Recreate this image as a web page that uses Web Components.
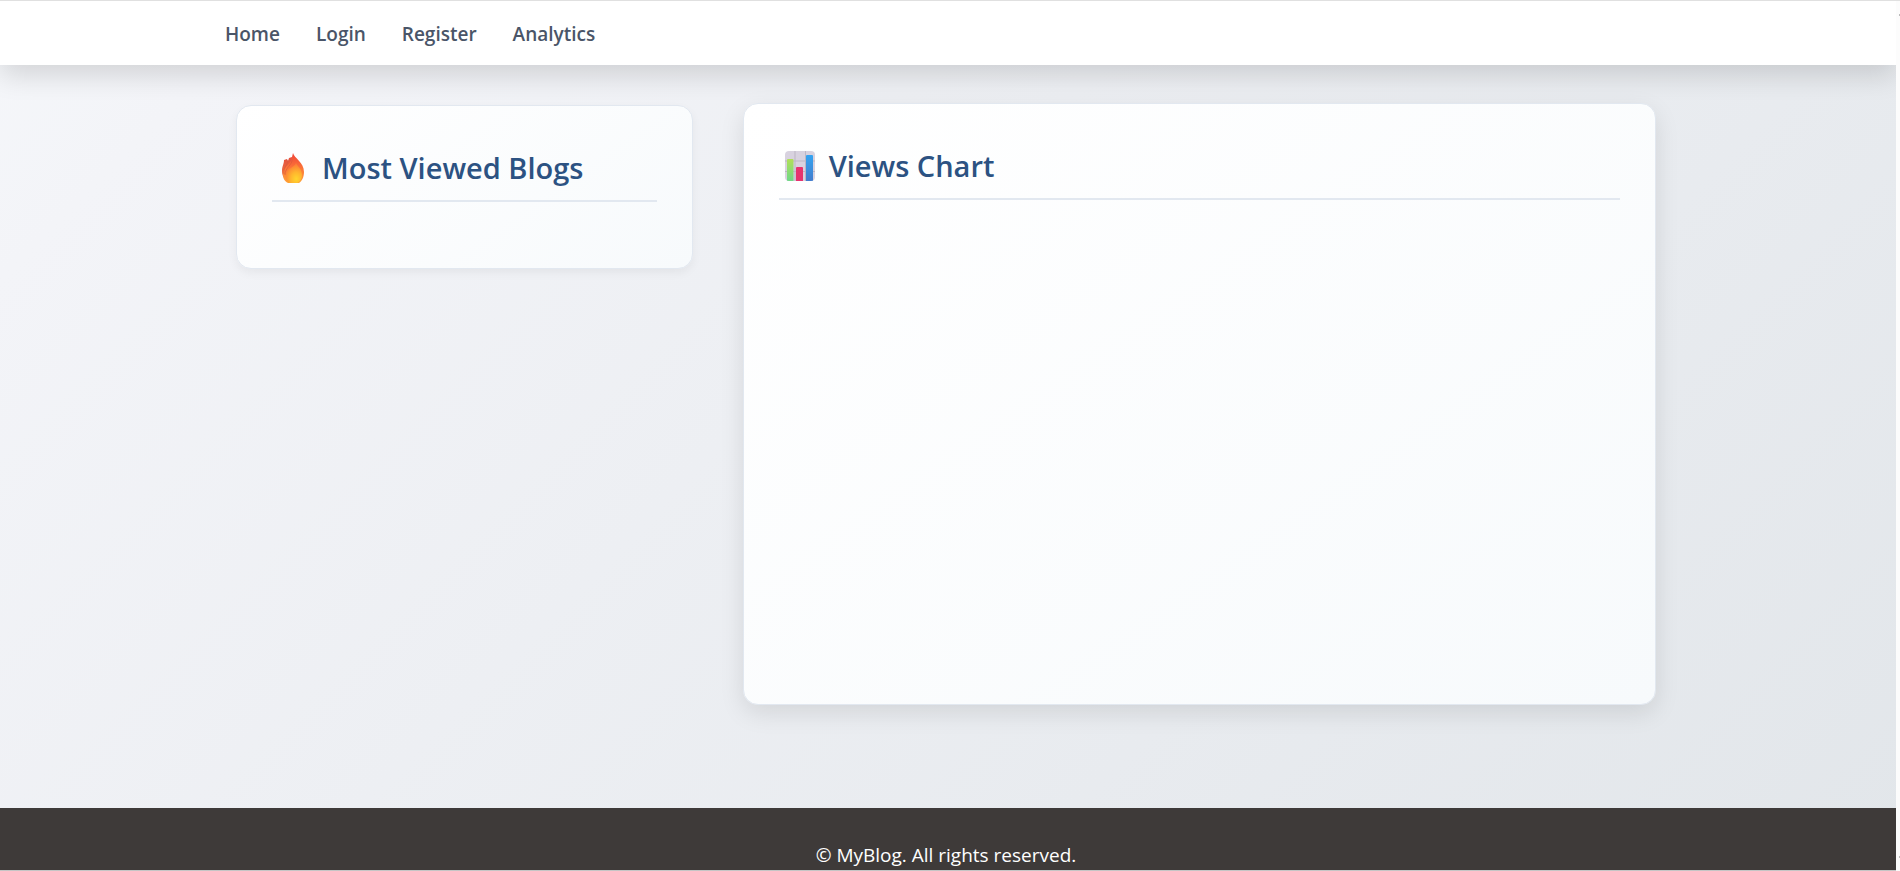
<!DOCTYPE html>
<html lang="en">
<head>
<meta charset="utf-8">
<title>MyBlog Analytics</title>
<style>
html, body { margin: 0; height: 100%; overflow: hidden; }
body { font-family: "Open Sans", "Noto Sans", sans-serif; font-size: 19px; line-height: 28px; }
</style>
</head>
<body>
<blog-app></blog-app>
<script>
const define = (name, html) => customElements.define(name, class extends HTMLElement {
  constructor() {
    super();
    const t = document.createElement('template');
    t.innerHTML = html;
    this.attachShadow({ mode: 'open' }).append(t.content.cloneNode(true));
  }
});

define('blog-nav', `
<style>
:host { display: block; background: #fff; box-shadow: 0 10px 28px rgba(0,0,0,.14); position: relative; z-index: 1; }
nav { display: flex; align-items: center; gap: 36px; padding: 19px 0 17px 225px; }
a { color: #4a5568; font-weight: 600; text-decoration: none; }
</style>
<nav aria-label="Main"><a href="#home">Home</a><a href="#login">Login</a><a href="#register">Register</a><a href="#analytics">Analytics</a></nav>`);

define('blog-card', `
<style>
:host { display: block; box-sizing: border-box; border: 1px solid #e2e8f0; border-radius: 15px; padding: 35px; background: linear-gradient(145deg, #fff, #f7fafc); box-shadow: 0 4px 10px rgba(0,0,0,.05); }
:host([raised]) { box-shadow: 0 8px 25px rgba(0,0,0,.1); }
h2 { display: flex; align-items: center; gap: 14px; margin: 0; height: 53px; padding: 0 6px 6px; border-bottom: 2px solid #e2e8f0; color: #2c5282; font-size: 29px; line-height: 40px; font-weight: 600; }
</style>
<h2><slot name="icon"></slot><slot name="title"></slot></h2><slot></slot>`);

define('fire-icon', `
<style>:host { display: block; width: 30px; height: 30px; } svg { display: block; }</style>
<svg width="30" height="30" viewBox="0 0 30 30" aria-hidden="true">
<defs>
<linearGradient id="a" x1="0" y1="0" x2="0" y2="1"><stop offset="0" stop-color="#f04438"/><stop offset=".5" stop-color="#fb7438"/><stop offset="1" stop-color="#ffa33a"/></linearGradient>
<linearGradient id="b" x1="0" y1="0" x2="0" y2="1"><stop offset="0" stop-color="#e4513e"/><stop offset="1" stop-color="#ee7b43"/></linearGradient>
<radialGradient id="c" cx=".65" cy=".8" r=".75"><stop offset="0" stop-color="#ffd52e"/><stop offset=".45" stop-color="#ffb52e"/><stop offset="1" stop-color="#fc7b36"/></radialGradient>
</defs>
<path fill="url(#b)" d="M6 7l3-1 1 2 1-3 3-1v25C7 28 4 24 4 18 4 13 6 11 6 7z"/>
<path fill="url(#a)" d="M15 0c1 5 11 9 11 19 0 5-2 9-5 11H10c-4-2-5-5-5-9 0-8 9-10 9-17z"/>
<path fill="url(#c)" d="M18 10c2 4 6 6 6 12 0 4-2 6-4 8h-9c-3-2-4-5-3-9 1-6 8-6 10-11z"/>
<path fill="none" stroke="#d95a3b" stroke-opacity=".65" d="M14 6c1 6-7 8-7 16M10 7c0 5-5 7-4 14"/>
</svg>`);

define('chart-icon', `
<style>:host { display: block; width: 30px; height: 30px; } svg { display: block; }</style>
<svg width="30" height="30" viewBox="0 0 30 30" aria-hidden="true">
<defs>
<linearGradient id="g" x1="0" y1="0" x2="0" y2="1"><stop offset="0" stop-color="#b1df58"/><stop offset="1" stop-color="#69d78c"/></linearGradient>
<linearGradient id="b" x1="0" y1="0" x2="0" y2="1"><stop offset="0" stop-color="#35a4f1"/><stop offset="1" stop-color="#4379ca"/></linearGradient>
<clipPath id="k"><rect width="30" height="30" rx="4"/></clipPath>
</defs>
<g clip-path="url(#k)">
<rect width="30" height="30" fill="#d8d2df"/>
<path d="M10 0v30M20.500 0v30M0 10h30M0 20.500h30" stroke="#bdb7c4"/>
<rect x="2" y="8" width="6.500" height="24" rx="1" fill="url(#g)"/>
<rect x="11" y="16" width="7" height="16" rx="1" fill="#e7336e"/>
<rect x="21" y="4" width="7" height="28" rx="1" fill="url(#b)"/>
</g></svg>`);

define('blog-footer', `
<style>
:host { display: block; background: #3e3a39; color: #fff; border-bottom: 1px solid #c5c5c5; }
p { margin: 0; padding: 33px 4px 1px 0; text-align: center; }
</style>
<p>© MyBlog. All rights reserved.</p>`);

define('edge-rail', `
<style>
:host { display: flex; flex-direction: column; justify-content: space-between; align-items: flex-end; box-sizing: border-box; width: 4px; background: #fcfcfc; padding: 13px 0; }
i { width: 1px; height: 2px; background: #bbb; }
</style><i></i><i></i>`);

define('blog-app', `
<style>
:host { display: flex; height: 100%; box-sizing: border-box; border-top: 1px solid #e0e0e0; }
.page { flex: 1; min-width: 0; display: flex; flex-direction: column; overflow: hidden; background: linear-gradient(135deg, #f5f7fa 0%, #f3f4f8 10%, #e2e6ea 100%); }
main { flex: 1; display: grid; grid-template-columns: 1fr 2fr; gap: 50px; align-items: start; padding: 38px 240px 0 236px; }
.popular { margin-top: 2px; height: 164px; }
.chart { height: 602px; }
</style>
<div class="page">
<blog-nav></blog-nav>
<main>
<blog-card class="popular"><fire-icon slot="icon"></fire-icon><span slot="title">Most Viewed Blogs</span></blog-card>
<blog-card class="chart" raised><chart-icon slot="icon"></chart-icon><span slot="title">Views Chart</span></blog-card>
</main>
<blog-footer></blog-footer>
</div>
<edge-rail></edge-rail>`);
</script>
</body>
</html>
